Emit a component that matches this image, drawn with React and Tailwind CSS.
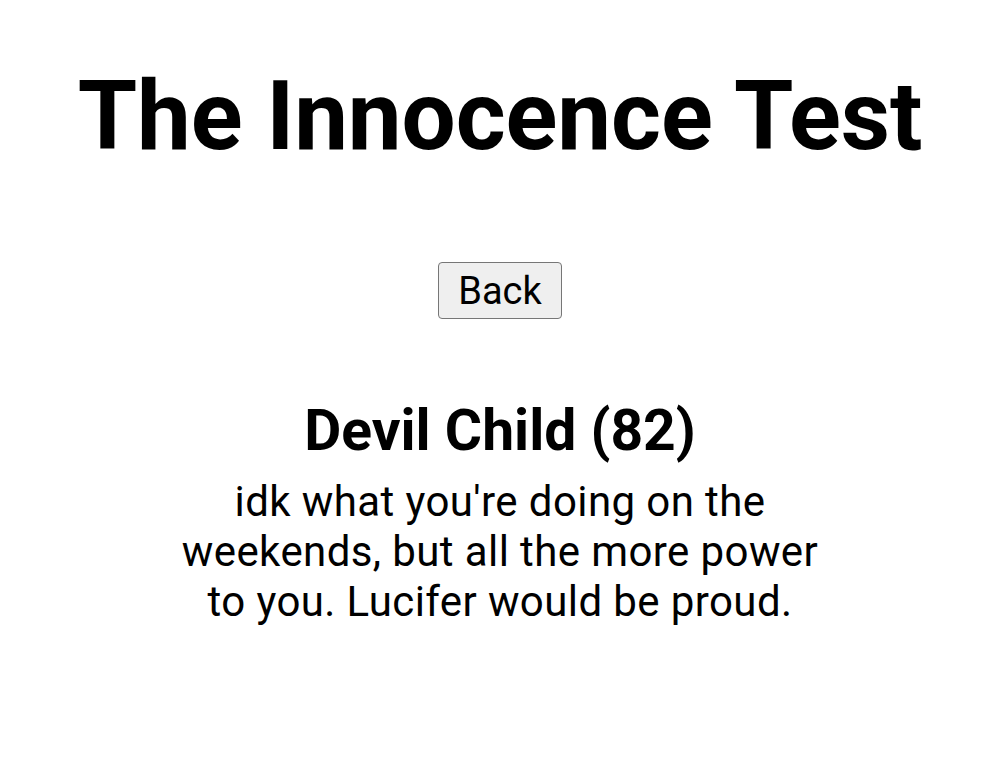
export default function App() {
  return (
    <div className="min-h-[781px] bg-white text-black flex flex-col items-center" style={{ fontFamily: "Roboto, 'Noto Sans', sans-serif" }}>
      <h1 className="mt-[60px] text-[96px] font-bold leading-[112px] text-center tracking-[-0.1px]">The Innocence Test</h1>
      <button className="mt-[90px] h-[57px] px-[19px] text-[38px] leading-none bg-[#efefef] border border-[#767676] rounded-[4px]">Back</button>
      <h2 className="mt-[80px] text-[57px] font-bold leading-[64px] text-center">Devil Child (82)</h2>
      <p className="mt-[14px] w-[700px] text-[42px] leading-[50px] tracking-[0.4px] text-center">idk what you're doing on the<br />weekends, but all the more power<br />to you. Lucifer would be proud.</p>
    </div>
  );
}
